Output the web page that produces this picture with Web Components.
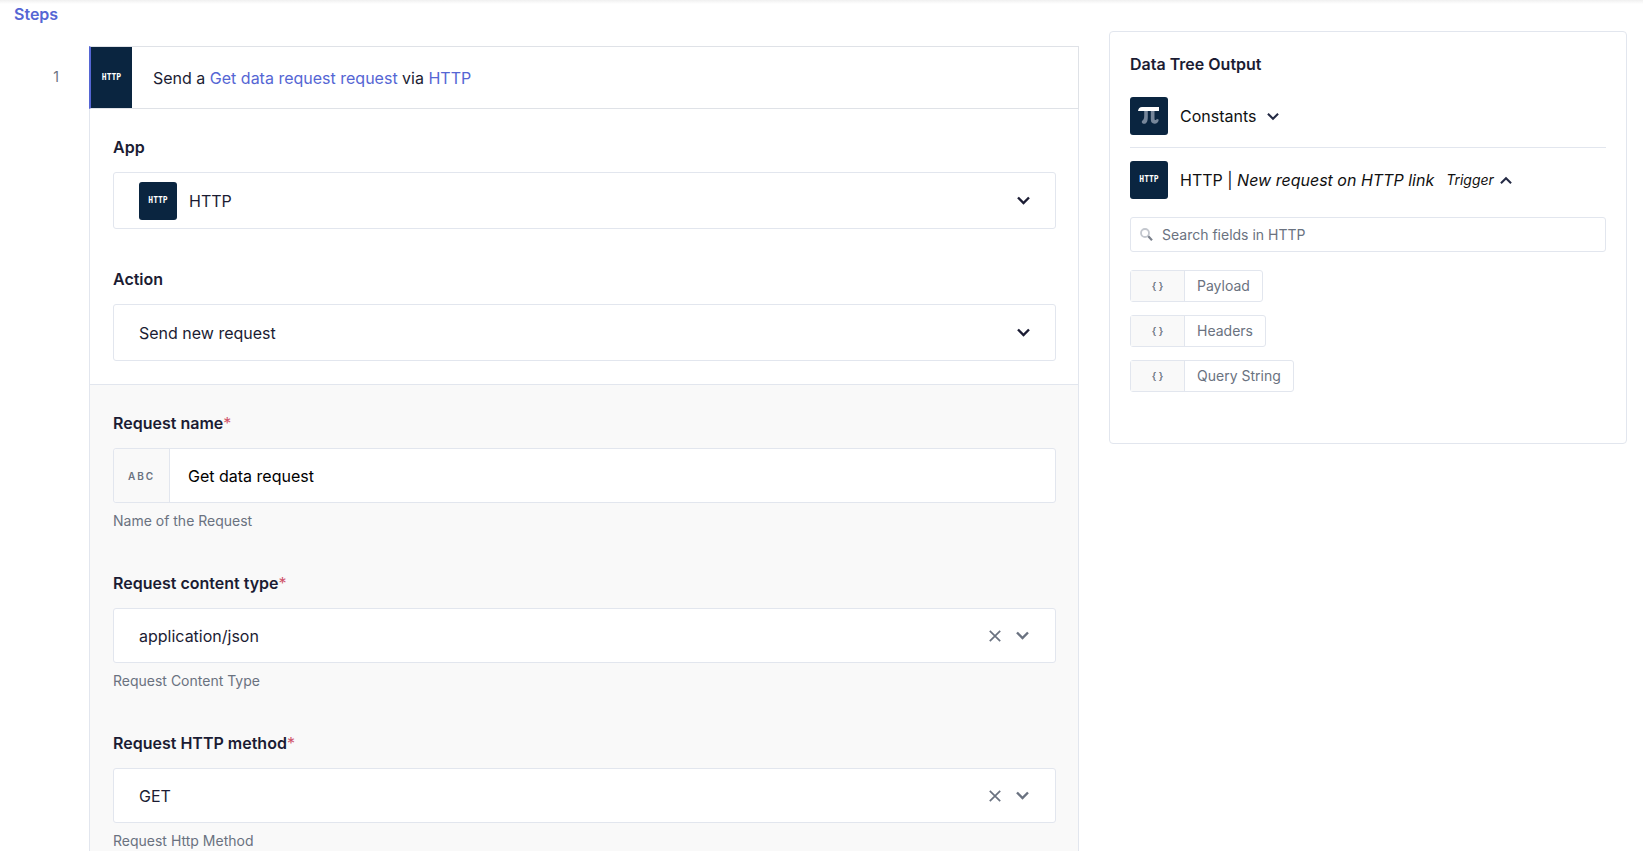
<!DOCTYPE html>
<html lang="en">
<head>
<meta charset="utf-8">
<title>Steps</title>
<style>
:root {
  --ink: #1b1c33;
  --muted: #6a7280;
  --link: #5566d4;
  --line: #e2e6ee;
  --navy: #0a2540;
  --soft: #f9f9f9;
  scrollbar-width: none;
}
body {
  margin: 0;
  background: #fff;
  color: var(--ink);
  font: 16px/24px Inter, "Liberation Sans", sans-serif;
}
a { color: var(--link); text-decoration: none; }
</style>
</head>
<body>
<steps-page>
  <step-card slot="steps" number="1">
    <span slot="title">Send a <a href="#name">Get data request request</a> via <a href="#app">HTTP</a></span>
    <select-field slot="setup" label="App" value="HTTP" logo></select-field>
    <select-field slot="setup" label="Action" value="Send new request"></select-field>
    <text-field label="Request name" value="Get data request" help="Name of the Request"></text-field>
    <select-field label="Request content type" value="application/json" help="Request Content Type" required></select-field>
    <select-field label="Request HTTP method" value="GET" help="Request Http Method" required></select-field>
  </step-card>
  <data-tree slot="tree">
    <tree-group icon="pi">Constants</tree-group>
    <tree-group icon="http" open>HTTP | <i>New request on HTTP link</i><small slot="kind">Trigger</small>
      <data-pill slot="items">Payload</data-pill>
      <data-pill slot="items">Headers</data-pill>
      <data-pill slot="items">Query String</data-pill>
    </tree-group>
  </data-tree>
</steps-page>

<script>
const chevron = (w, width) => `<svg class="chevron" width="${w}" height="9" viewBox="0 0 13 9" fill="none" stroke="currentColor" stroke-width="${width}" aria-hidden="true"><path d="M1 1.5 6.5 7 12 1.5"/></svg>`

const base = `
:host, * { box-sizing: border-box; }
:host { display: block; }
`

// square navy logo, either the HTTP wordmark or pi
class AppLogo extends HTMLElement {
  constructor() {
    super()
    const shadow = this.attachShadow({mode: "open"})
    const pi = `<svg width="38" height="38" viewBox="0 0 38 38" aria-hidden="true">
      <path fill="#76869a" d="M14.2 13.5h3.6v6.4c0 3.6-.8 6.8-3.6 6.8-1.5 0-2.4-.6-2.4-1.8 0-1 .6-1.5 1.2-2 .9-.8 1.2-2 1.2-4.2zM20.8 13.5h3.7v7.4c0 1.6.3 2.2 1 2.2.6 0 1-.6 1.4-1.4l1.9 1c-.5 2.6-2 4-4.3 4-2.5 0-3.7-1.5-3.7-4.4z"/>
      <path fill="#fff" d="M8 14c.4-2.6 1.8-4 4-4h17v4z"/>
    </svg>`
    shadow.innerHTML = `<style>${base}
      :host {
        display: flex;
        flex: none;
        align-items: center;
        justify-content: center;
        width: 38px;
        height: 38px;
        border-radius: 3px;
        background: var(--navy);
        color: #fff;
        font: bold 8px/12px "DejaVu Sans Mono", monospace;
      }
      </style>${this.getAttribute("kind") === "pi" ? pi : "HTTP"}`
  }
}

class StepsPage extends HTMLElement {
  constructor() {
    super()
    this.attachShadow({mode: "open"}).innerHTML = `<style>${base}
      :host { background: linear-gradient(#f0f0f0, #fff) 0 0 / 100% 4px no-repeat; }
      main {
        display: grid;
        grid-template-columns: minmax(0, 1079fr) minmax(0, 518fr);
        gap: 30px;
        padding-right: 16px;
        align-items: start;
      }
      h1 {
        margin: 0;
        padding: 2px 14px 20px;
        color: var(--link);
        font-size: 16px;
        font-weight: 600;
      }
      aside { padding-top: 31px; }
      </style>
      <main>
        <section><h1>Steps</h1><slot name="steps"></slot></section>
        <aside><slot name="tree"></slot></aside>
      </main>`
  }
}

class StepCard extends HTMLElement {
  constructor() {
    super()
    this.attachShadow({mode: "open"}).innerHTML = `<style>${base}
      :host { display: flex; }
      .number {
        flex: none;
        width: 89px;
        padding: 19px 30px 0 0;
        color: var(--muted);
        font-size: 14px;
        text-align: right;
      }
      article { flex: 1; min-width: 0; }
      header {
        display: flex;
        align-items: center;
        gap: 21px;
        height: 63px;
        border: 1px solid #dfe2e7;
        border-left: 2px solid var(--link);
      }
      header app-logo { width: 41px; height: 61px; border-radius: 0; }
      .setup, .fields {
        display: flex;
        flex-direction: column;
        gap: 38px;
        padding: 26px 22px 23px 23px;
        border: solid var(--line);
        border-width: 0 1px 1px;
      }
      .fields { background: var(--soft); }
      </style>
      <div class="number">${this.getAttribute("number")}</div>
      <article>
        <header><app-logo></app-logo><slot name="title"></slot></header>
        <div class="setup"><slot name="setup"></slot></div>
        <div class="fields"><slot></slot></div>
      </article>`
  }
}

const fieldStyle = `${base}
label { display: block; margin-bottom: 13px; font-weight: 600; }
label span { color: #d0546a; font-weight: 400; }
.box {
  display: flex;
  align-items: center;
  height: 55px;
  border: 1px solid var(--line);
  border-radius: 3px;
  background: #fff;
}
.tall { height: 57px; }
input, select {
  appearance: none;
  flex: 1;
  min-width: 0;
  height: 100%;
  margin: 0;
  padding: 0 0 0 25px;
  border: 0;
  outline: 0;
  background: none;
  color: inherit;
  font: inherit;
}
p { margin: 6px 0 0; color: var(--muted); font-size: 14px; }
`

class TextField extends HTMLElement {
  constructor() {
    super()
    this.attachShadow({mode: "open"}).innerHTML = `<style>${fieldStyle}
      .type {
        display: flex;
        align-items: center;
        justify-content: center;
        width: 56px;
        height: 100%;
        border-right: 1px solid var(--line);
        border-radius: 3px 0 0 3px;
        background: var(--soft);
        color: var(--muted);
        font-size: 10px;
        font-weight: 600;
        letter-spacing: 2px;
      }
      input { padding-left: 18px; color: #000; }
      </style>
      <label for="field">${this.getAttribute("label")}<span>*</span></label>
      <div class="box"><div class="type">ABC</div><input id="field" type="text" value="${this.getAttribute("value")}"></div>
      <p>${this.getAttribute("help")}</p>`
  }
}

class SelectField extends HTMLElement {
  constructor() {
    super()
    const required = this.hasAttribute("required")
    const logo = this.hasAttribute("logo")
    const help = this.getAttribute("help")
    this.attachShadow({mode: "open"}).innerHTML = `<style>${fieldStyle}
      app-logo { margin-left: 25px; }
      app-logo + select { padding-left: 12px; }
      .chevron { flex: none; margin-right: 25px; }
      .clear {
        display: flex;
        margin: 0 15px 0 0;
        padding: 0;
        border: 0;
        background: none;
        color: var(--muted);
      }
      .clear + .chevron { margin-right: 26px; color: var(--muted); }
      </style>
      <label for="field">${this.getAttribute("label")}${required ? "<span>*</span>" : ""}</label>
      <div class="box ${required ? "" : "tall"}">
        ${logo ? "<app-logo></app-logo>" : ""}
        <select id="field"><option>${this.getAttribute("value")}</option></select>
        ${required ? `<button class="clear" type="button" aria-label="Clear"><svg width="12" height="12" viewBox="0 0 12 12" fill="none" stroke="currentColor" stroke-width="1.7"><path d="M.8.8l10.4 10.4M11.2.8.8 11.2"/></svg></button>` : ""}
        ${chevron(13, 2.4)}
      </div>
      ${help ? `<p>${help}</p>` : ""}`
  }
}

class DataTree extends HTMLElement {
  constructor() {
    super()
    this.attachShadow({mode: "open"}).innerHTML = `<style>${base}
      :host {
        padding: 20px 20px 51px;
        border: 1px solid var(--line);
        border-radius: 4px;
      }
      h2 { margin: 0 0 21px; font-size: 16px; font-weight: 600; }
      ::slotted(tree-group:not(:last-child)) {
        margin-bottom: 13px;
        padding-bottom: 12px;
        border-bottom: 1px solid var(--line);
      }
      </style>
      <h2>Data Tree Output</h2>
      <slot></slot>`
  }
}

class TreeGroup extends HTMLElement {
  constructor() {
    super()
    const open = this.hasAttribute("open")
    this.attachShadow({mode: "open"}).innerHTML = `<style>${base}
      .row {
        display: flex;
        align-items: center;
        width: 100%;
        padding: 0;
        border: 0;
        background: none;
        color: #111;
        font: inherit;
        text-align: left;
      }
      app-logo { margin-right: 12px; }
      ::slotted(small) { margin-left: 12px; font-size: 14px; font-style: italic; }
      .chevron { margin-left: 11px; color: #242a44; }
      :host([open]) .chevron { margin-left: 6px; rotate: 180deg; }
      .search {
        display: flex;
        align-items: center;
        gap: 9px;
        height: 35px;
        margin: 18px 0;
        padding-left: 9px;
        border: 1px solid var(--line);
        border-radius: 3px;
      }
      input {
        flex: 1;
        min-width: 0;
        padding: 0;
        border: 0;
        outline: 0;
        background: none;
        color: var(--muted);
        font: inherit;
        font-size: 14px;
      }
      input::placeholder { color: var(--muted); opacity: 1; }
      .items { display: flex; flex-direction: column; align-items: flex-start; gap: 13px; }
      </style>
      <button class="row" type="button" aria-expanded="${open}">
        <app-logo kind="${this.getAttribute("icon")}"></app-logo><span><slot></slot></span><slot name="kind"></slot>${chevron(12, 2.2)}
      </button>
      ${open ? `
      <label class="search">
        <svg width="13" height="13" viewBox="0 0 13 13" fill="none" aria-hidden="true"><circle cx="5" cy="5" r="4" stroke="#c3c7ce" stroke-width="1.8"/><path stroke="#7b818c" stroke-width="2.2" d="M8.3 8.3 12 12.2"/></svg>
        <input type="text" placeholder="Search fields in HTTP" aria-label="Search fields in HTTP">
      </label>
      <div class="items"><slot name="items"></slot></div>` : ""}`
  }
}

class DataPill extends HTMLElement {
  constructor() {
    super()
    this.attachShadow({mode: "open"}).innerHTML = `<style>${base}
      :host {
        display: flex;
        height: 32px;
        border: 1px solid var(--line);
        border-radius: 3px;
        color: var(--muted);
        font-size: 14px;
        line-height: 30px;
      }
      .type {
        width: 54px;
        border-right: 1px solid var(--line);
        background: var(--soft);
        font-size: 10px;
        font-weight: 600;
        text-align: center;
      }
      .name { padding: 0 12px; }
      </style>
      <div class="type">{ }</div><div class="name"><slot></slot></div>`
  }
}

customElements.define("app-logo", AppLogo)
customElements.define("steps-page", StepsPage)
customElements.define("step-card", StepCard)
customElements.define("text-field", TextField)
customElements.define("select-field", SelectField)
customElements.define("data-tree", DataTree)
customElements.define("tree-group", TreeGroup)
customElements.define("data-pill", DataPill)
</script>
</body>
</html>
